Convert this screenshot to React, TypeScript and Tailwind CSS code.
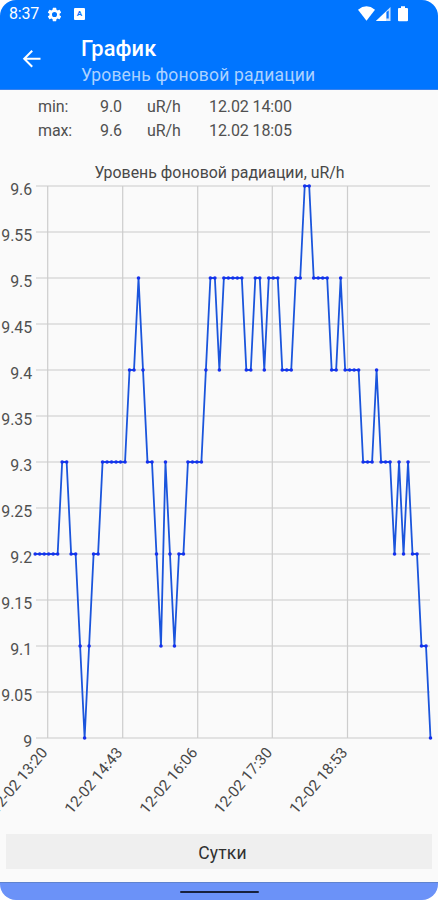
const RUNS: [number, number][] = [
  [9.2, 6], [9.3, 2], [9.2, 2], [9.1, 1], [9.0, 1], [9.1, 1], [9.2, 2], [9.3, 6], [9.4, 2], [9.5, 1],
  [9.4, 1], [9.3, 2], [9.2, 1], [9.1, 1], [9.3, 1], [9.2, 1], [9.1, 1], [9.2, 2], [9.3, 4], [9.4, 1],
  [9.5, 2], [9.4, 1], [9.5, 5], [9.4, 2], [9.5, 2], [9.4, 1], [9.5, 3], [9.4, 3], [9.5, 2], [9.6, 2],
  [9.5, 4], [9.4, 2], [9.5, 1], [9.4, 4], [9.3, 3], [9.4, 1], [9.3, 3], [9.2, 1], [9.3, 1], [9.2, 1],
  [9.3, 1], [9.2, 2], [9.1, 2], [9.0, 1],
];

const TOP = 28;
const values = RUNS.flatMap(([v, n]) => Array<number>(n).fill(v));
const points = values.map((v, i) => ({ x: 35.2 + i * 4.492, y: TOP + (9.6 - v) * 920 }));

const yLabels = ["9.6", "9.55", "9.5", "9.45", "9.4", "9.35", "9.3", "9.25", "9.2", "9.15", "9.1", "9.05", "9"];
const xLabels = [
  { x: 47.7, text: "12-02 13:20" },
  { x: 122.7, text: "12-02 14:43" },
  { x: 197.7, text: "12-02 16:06" },
  { x: 272.3, text: "12-02 17:30" },
  { x: 347.5, text: "12-02 18:53" },
];

function StatusBar() {
  return (
    <div className="flex h-7 items-center pl-[9px] pr-[30px] text-white">
      <span className="w-[37px] text-[16px] leading-7 tracking-[-0.2px]">8:37</span>
      <svg className="size-[17px]" viewBox="0 0 24 24" fill="currentColor">
        <path d="M19.14 12.94c.04-.3.06-.61.06-.94s-.02-.64-.07-.94l2.03-1.58a.49.49 0 0 0 .12-.61l-1.92-3.32a.49.49 0 0 0-.59-.22l-2.39.96a7 7 0 0 0-1.62-.94l-.36-2.54A.48.48 0 0 0 13.92 2.4h-3.84a.48.48 0 0 0-.47.41l-.36 2.54c-.59.24-1.13.57-1.62.94l-2.39-.96a.48.48 0 0 0-.59.22L2.74 8.87a.48.48 0 0 0 .12.61l2.03 1.58a6 6 0 0 0-.02 1.88l-2.03 1.58a.49.49 0 0 0-.12.61l1.92 3.32c.12.22.37.29.59.22l2.39-.96c.5.38 1.03.7 1.62.94l.36 2.54c.05.24.24.41.48.41h3.84c.24 0 .44-.17.47-.41l.36-2.54a7 7 0 0 0 1.62-.94l2.39.96c.22.08.47 0 .59-.22l1.92-3.32a.48.48 0 0 0-.12-.61zM12 15.6a3.6 3.6 0 1 1 0-7.2 3.6 3.6 0 0 1 0 7.2z" />
      </svg>
      <span className="ml-[11px] flex h-3 w-[11px] items-center justify-center rounded-[1px] bg-white text-[8px] font-bold leading-none text-[#0875ff]">A</span>
      <svg className="ml-auto h-4 w-[50px]" viewBox="0 0 50 16" fill="currentColor">
        <path d="M0 3.700Q8.500-3 17 3.700L8.500 14.700Z" />
        <path d="M18 15L32.500 1V15Z" opacity=".8" />
        <path d="M18 15L28 5.700V15Z" />
        <path d="M28.500 6V12.500H30.700V4.500Z" fill="#0875ff" />
        <path d="M43 .3h4V2H49q1 0 1 1V14.300q0 1-1 1h-8q-1 0-1-1V3q0-1 1-1h2Z" />
      </svg>
    </div>
  );
}

function Header() {
  return (
    <header className="h-[90px] shrink-0 border-b border-[#3a82ec] bg-[#0075ff]">
      <StatusBar />
      <div className="flex h-[61px]">
        <svg className="ml-[22px] mt-[21px] h-5 w-5 shrink-0 text-white" viewBox="0 0 20 20" fill="none" stroke="currentColor" strokeWidth="2">
          <path d="M18.500 9.700H2.500M10.200 1.700L2.200 9.700L10.200 17.700" />
        </svg>
        <div className="ml-[39px] pt-[7px]">
          <h1 className="text-[21.800px] font-medium leading-[27px] tracking-[0.15px] text-white">График</h1>
          <p className="whitespace-nowrap text-[17.5px] leading-[27px] tracking-[0.16px] text-[#acd2ff]">Уровень фоновой радиации</p>
        </div>
      </div>
    </header>
  );
}

function Stat({ name, value, time }: { name: string; value: string; time: string }) {
  return (
    <div className="grid h-6 grid-cols-[62px_47px_62px_1fr] items-center text-[16px] tracking-[-0.1px] text-[#505050]">
      <span>{name}</span>
      <span>{value}</span>
      <span>uR/h</span>
      <span>{time}</span>
    </div>
  );
}

function Chart() {
  return (
    <svg className="block h-[672px] w-[438px] shrink-0" viewBox="0 0 438 672">
      <text x="219.5" y="20" textAnchor="middle" fontSize="15.9" fill="#484848">Уровень фоновой радиации, uR/h</text>
      {yLabels.map((label, i) => (
        <g key={label}>
          <line x1="36" x2="430" y1={TOP + i * 46} y2={TOP + i * 46} stroke="#c9c9c9" strokeWidth="1.2" />
          <text x="32.200" y={TOP + 9 + i * 46} textAnchor="end" fontSize="15.9" fill="#505050">{label}</text>
        </g>
      ))}
      {xLabels.map(({ x, text }) => (
        <g key={text}>
          <line x1={x} x2={x} y1={TOP} y2={TOP + 552} stroke="#cdcdcd" strokeWidth="1.2" />
          <text transform={`translate(${x + 0.7} 595) rotate(-50)`} textAnchor="end" fontSize="15.3" fill="#484848">{text}</text>
        </g>
      ))}
      <polyline points={points.map((p) => `${p.x},${p.y}`).join(" ")} fill="none" stroke="#1b55dc" strokeWidth="1.8" strokeLinejoin="round" />
      {points.map((p, i) => (
        <circle key={i} cx={p.x} cy={p.y} r="1.8" fill="#1530ed" />
      ))}
    </svg>
  );
}

export default function App() {
  return (
    <div className="h-[900px] w-[438px] overflow-hidden bg-white font-[Roboto,sans-serif]">
      <div className="flex h-full flex-col overflow-hidden rounded-[16px] bg-[#fafafa]">
        <Header />
        <section className="h-[68px] shrink-0 pl-[38px] pt-[5px]">
          <Stat name="min:" value="9.0" time="12.02 14:00" />
          <Stat name="max:" value="9.6" time="12.02 18:05" />
        </section>
        <Chart />
        <button className="ml-[6px] mt-1 h-[35px] w-[426px] shrink-0 bg-[#efefef] pl-[7px] pt-[3px] text-[17.5px] tracking-[0.2px] text-[#303030]">Сутки</button>
        <footer className="mt-auto flex h-[18px] shrink-0 items-center justify-center border-t border-[#5f83cf] bg-[#6b92f8]">
          <span className="mt-px h-[2px] w-[79px] rounded-full bg-[#18213d]" />
        </footer>
      </div>
    </div>
  );
}
